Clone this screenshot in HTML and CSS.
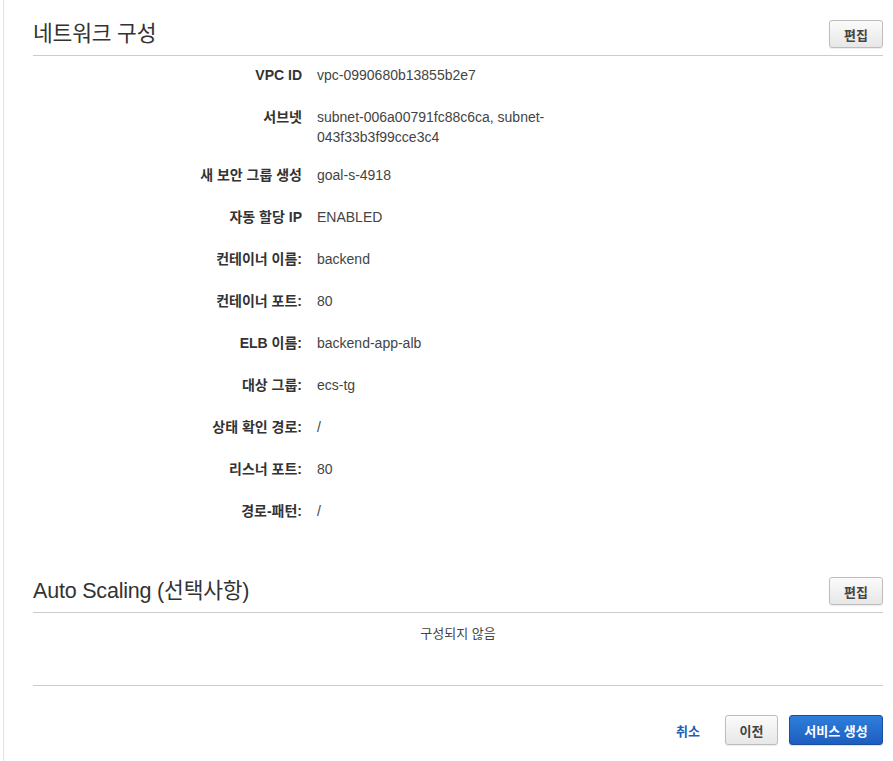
FILE: index.html
```html
<!DOCTYPE html>
<html lang="ko">
<head>
<meta charset="utf-8">
<title>네트워크 구성</title>
<link rel="stylesheet" href="styles.css">
</head>
<body>
<div class="page">
  <section class="section">
    <div class="section-head">
      <h2 class="section-title">네트워크 구성</h2>
      <button class="btn btn-edit" type="button">편집</button>
    </div>
    <div class="rule"></div>
    <div class="kv">
      <div class="row"><div class="key">VPC ID</div><div class="val">vpc-0990680b13855b2e7</div></div>
      <div class="row"><div class="key">서브넷</div><div class="val">subnet-006a00791fc88c6ca, subnet-043f33b3f99cce3c4</div></div>
      <div class="row after-wrap"><div class="key">새 보안 그룹 생성</div><div class="val">goal-s-4918</div></div>
      <div class="row"><div class="key">자동 할당 IP</div><div class="val">ENABLED</div></div>
      <div class="row"><div class="key">컨테이너 이름:</div><div class="val">backend</div></div>
      <div class="row"><div class="key">컨테이너 포트:</div><div class="val">80</div></div>
      <div class="row"><div class="key">ELB 이름:</div><div class="val">backend-app-alb</div></div>
      <div class="row"><div class="key">대상 그룹:</div><div class="val">ecs-tg</div></div>
      <div class="row"><div class="key">상태 확인 경로:</div><div class="val">/</div></div>
      <div class="row"><div class="key">리스너 포트:</div><div class="val">80</div></div>
      <div class="row"><div class="key">경로-패턴:</div><div class="val">/</div></div>
    </div>
  </section>

  <section class="section section-second">
    <div class="section-head">
      <h2 class="section-title">Auto Scaling (선택사항)</h2>
      <button class="btn btn-edit" type="button">편집</button>
    </div>
    <div class="rule"></div>
    <div class="empty">구성되지 않음</div>
    <div class="rule rule-flat"></div>
  </section>

  <div class="footer">
    <a class="link-cancel" href="#">취소</a>
    <button class="btn btn-prev" type="button">이전</button>
    <button class="btn btn-primary" type="button">서비스 생성</button>
  </div>
</div>
</body>
</html>
```

FILE: styles.css
```css
html, body {
  margin: 0;
  padding: 0;
  background: #ffffff;
}

body {
  font-family: "Liberation Sans", "Noto Sans CJK KR", Arial, sans-serif;
  color: #444444;
  font-size: 14px;
}

.page {
  margin-left: 3px;
  border-left: 1px solid #e1e1e1;
  padding: 20px 10px 0 29px;
  min-height: 761px;
  box-sizing: border-box;
}

.section-head {
  display: flex;
  justify-content: space-between;
  align-items: center;
  height: 28px;
}

.section-title {
  margin: 0;
  font-size: 21.5px;
  font-weight: normal;
  color: #333333;
  line-height: 28px;
  letter-spacing: -0.2px;
}

.rule {
  margin-top: 7px;
  border-top: 1px solid #cccccc;
}

.rule-flat {
  margin-top: 0;
}

.kv {
  padding-top: 9px;
}

.row {
  display: grid;
  grid-template-columns: 269px 260px;
  column-gap: 15px;
  line-height: 20px;
}

.row + .row {
  margin-top: 22px;
}

.row.after-wrap {
  margin-top: 18px;
}

.key {
  text-align: right;
  font-weight: bold;
  color: #333333;
}

.val {
  color: #444444;
}

.section-second {
  margin-top: 56px;
}

.empty {
  height: 72px;
  box-sizing: border-box;
  padding-top: 11px;
  text-align: center;
  font-size: 13px;
  line-height: 20px;
  color: #444444;
}

.btn {
  font-family: "Liberation Sans", "Noto Sans CJK KR", Arial, sans-serif;
  font-weight: bold;
  font-size: 13px;
  border-radius: 3px;
  cursor: pointer;
  padding: 0;
}

.btn-edit,
.btn-prev {
  background: linear-gradient(#fbfbfb, #e7e7e7);
  border: 1px solid #bdbdbd;
  color: #444444;
  box-shadow: 0 1px 1px rgba(0, 0, 0, 0.08);
}

.btn-edit {
  width: 54px;
  height: 28px;
}

.footer {
  display: flex;
  justify-content: flex-end;
  align-items: center;
  padding-top: 29px;
}

.link-cancel {
  color: #1f5fb8;
  font-weight: bold;
  font-size: 13px;
  text-decoration: none;
  margin-right: 25px;
}

.btn-prev {
  width: 53px;
  height: 30px;
  margin-right: 11px;
}

.btn-primary {
  width: 94px;
  height: 30px;
  background: linear-gradient(#2f7edb, #1d5ec0);
  border: 1px solid #1a4f9f;
  color: #ffffff;
  box-shadow: 0 1px 1px rgba(0, 0, 0, 0.12);
}
```
